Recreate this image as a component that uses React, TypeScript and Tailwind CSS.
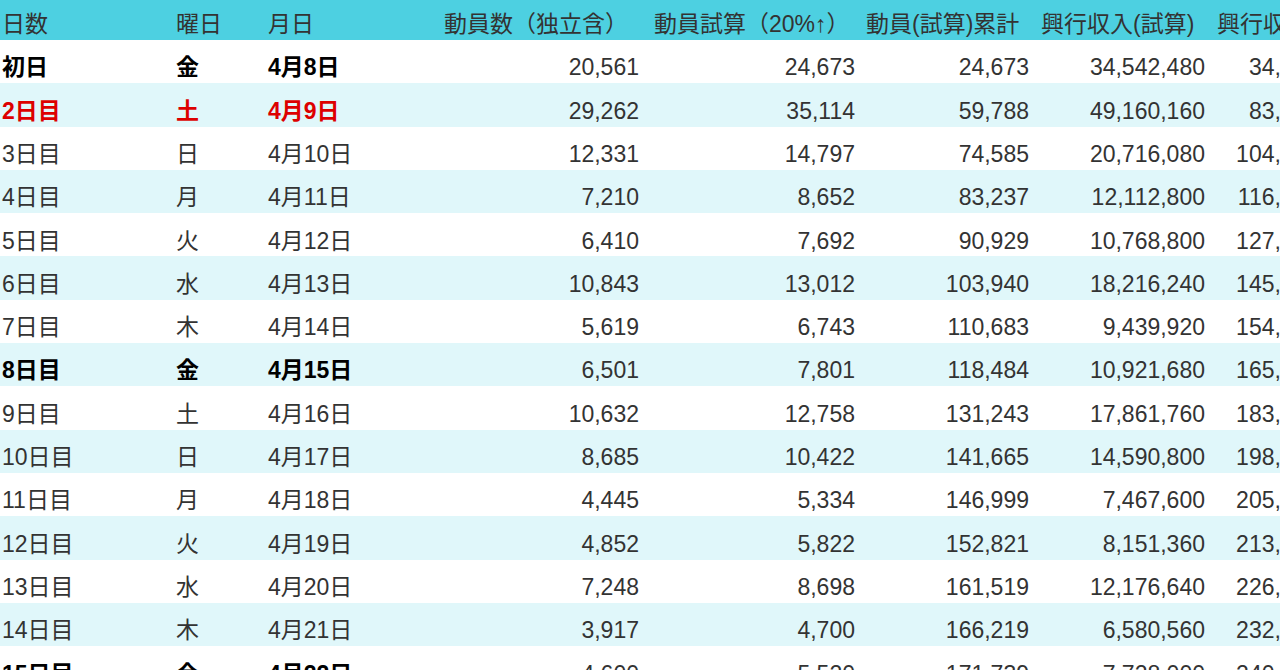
const ROWS: string[][] = [
  ['初日', '金', '4月8日', '20,561', '24,673', '24,673', '34,542,480', '34,542,480'],
  ['2日目', '土', '4月9日', '29,262', '35,114', '59,788', '49,160,160', '83,702,640'],
  ['3日目', '日', '4月10日', '12,331', '14,797', '74,585', '20,716,080', '104,418,720'],
  ['4日目', '月', '4月11日', '7,210', '8,652', '83,237', '12,112,800', '116,531,520'],
  ['5日目', '火', '4月12日', '6,410', '7,692', '90,929', '10,768,800', '127,300,320'],
  ['6日目', '水', '4月13日', '10,843', '13,012', '103,940', '18,216,240', '145,516,560'],
  ['7日目', '木', '4月14日', '5,619', '6,743', '110,683', '9,439,920', '154,956,480'],
  ['8日目', '金', '4月15日', '6,501', '7,801', '118,484', '10,921,680', '165,878,160'],
  ['9日目', '土', '4月16日', '10,632', '12,758', '131,243', '17,861,760', '183,739,920'],
  ['10日目', '日', '4月17日', '8,685', '10,422', '141,665', '14,590,800', '198,330,720'],
  ['11日目', '月', '4月18日', '4,445', '5,334', '146,999', '7,467,600', '205,798,320'],
  ['12日目', '火', '4月19日', '4,852', '5,822', '152,821', '8,151,360', '213,949,680'],
  ['13日目', '水', '4月20日', '7,248', '8,698', '161,519', '12,176,640', '226,126,320'],
  ['14日目', '木', '4月21日', '3,917', '4,700', '166,219', '6,580,560', '232,706,880'],
  ['15日目', '金', '4月22日', '4,600', '5,520', '171,739', '7,728,000', '240,434,880'],
];

const HEADERS = [
  '日数',
  '曜日',
  '月日',
  '動員数（独立含）',
  '動員試算（20%↑）',
  '動員(試算)累計',
  '興行収入(試算)',
  '興行収入累計',
];

// column widths, header padding, cell alignment
const COLS = [
  { w: 'w-[170px]', h: 'pl-[2px]', c: 'pl-[2px]' },
  { w: 'w-[92px]', h: 'pl-[6px]', c: 'pl-[6px]' },
  { w: 'w-[178px]', h: 'pl-[6px]', c: 'pl-[6px]' },
  { w: 'w-[208px]', h: 'pl-[4px]', c: 'justify-end pr-[9px]' },
  { w: 'w-[216px]', h: 'pl-[6px]', c: 'justify-end pr-[9px]' },
  { w: 'w-[174px]', h: 'pl-[2px]', c: 'justify-end pr-[9px]' },
  { w: 'w-[176px]', h: 'pl-[3px]', c: 'justify-end pr-[9px]' },
  { w: 'w-[159px]', h: 'pl-[3px]', c: 'justify-end pr-[9px]' },
];

export default function App() {
  return (
    <div
      className="h-[670px] w-[1280px] overflow-hidden bg-white text-[23px] text-[#333]"
      style={{ fontFamily: '"Liberation Sans", "Noto Sans CJK JP", sans-serif' }}
    >
      <div className="flex h-[40px] bg-[#4dd0e1] text-[#333]">
        {HEADERS.map((h, i) => (
          <div
            key={h}
            className={`flex shrink-0 items-center whitespace-nowrap pt-[9px] ${COLS[i].w} ${COLS[i].h}`}
          >
            {h}
          </div>
        ))}
      </div>

      {ROWS.map((r, idx) => {
        const bold = idx === 0 || idx === 1 || idx === 7 || idx === 14;
        const red = idx === 1;
        return (
          <div
            key={r[0]}
            className={`flex h-[43.3px] ${idx % 2 === 1 ? 'bg-[#e0f7fa]' : 'bg-white'}`}
          >
            {r.map((v, i) => (
              <div
                key={i}
                className={`flex shrink-0 items-center whitespace-nowrap pt-[12px] ${COLS[i].w} ${COLS[i].c} ${
                  i < 3 && bold ? 'font-bold' : ''
                } ${i < 3 && bold ? (red ? 'text-[#dd0000]' : 'text-black') : ''}`}
              >
                {v}
              </div>
            ))}
          </div>
        );
      })}
    </div>
  );
}
